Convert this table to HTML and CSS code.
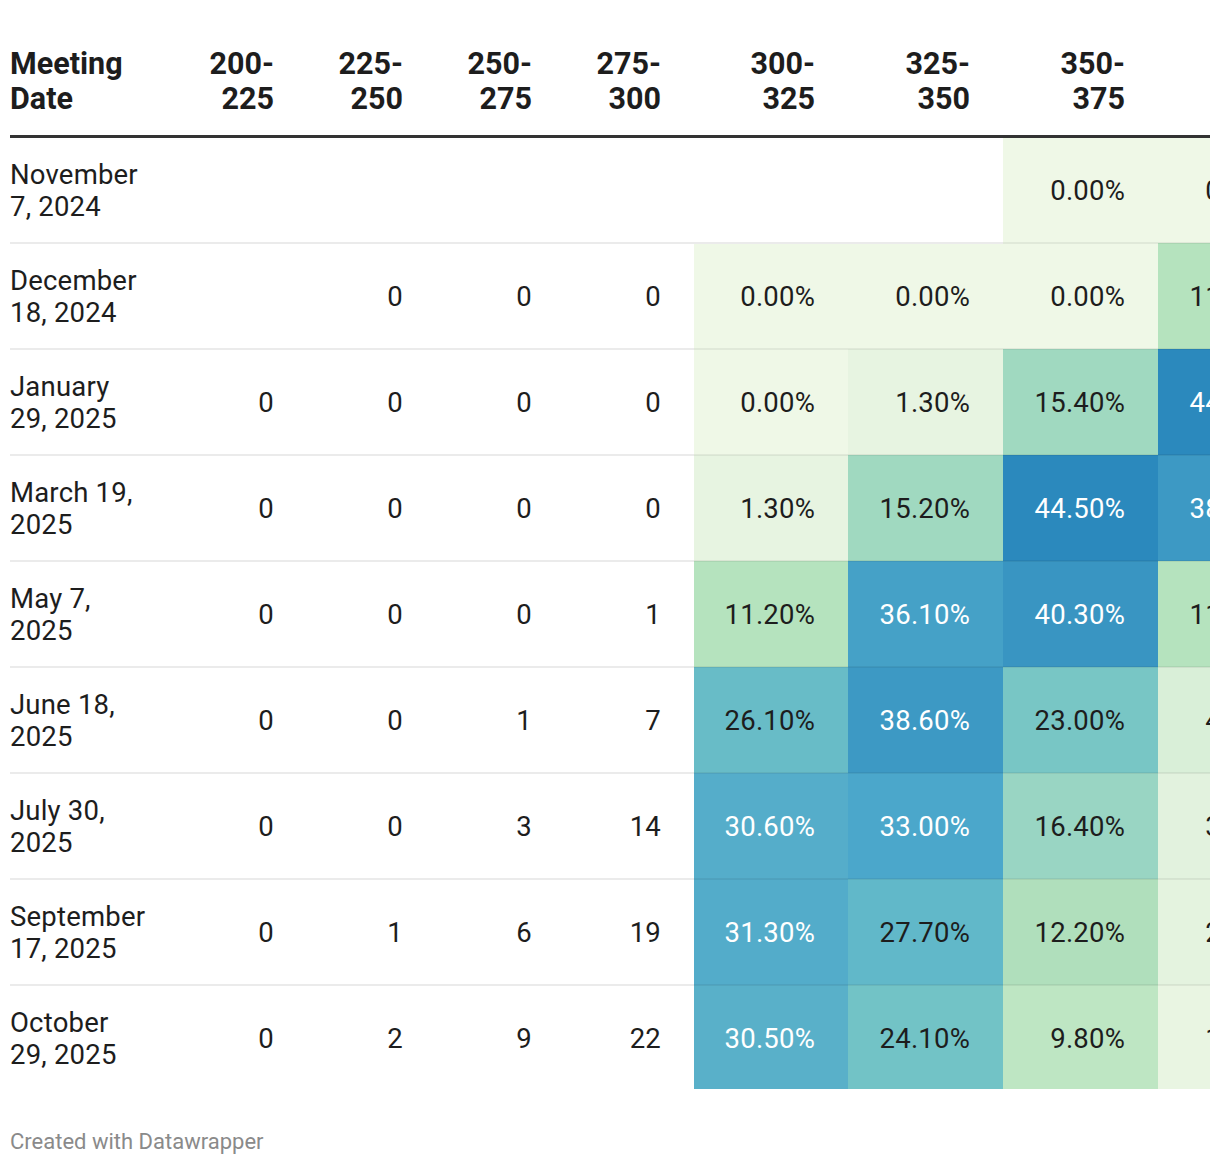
FILE: index.html
```html
<!DOCTYPE html>
<html lang="en">
<head>
<meta charset="utf-8">
<title>Meeting probabilities</title>
<link rel="stylesheet" href="styles.css">
</head>
<body>
<div class="chart">
  <div class="scroller">
    <table class="dw">
      <colgroup>
        <col class="c-date"><col class="c-num"><col class="c-num"><col class="c-num"><col class="c-num">
        <col class="c-pct1"><col class="c-pct"><col class="c-pct"><col class="c-pct">
      </colgroup>
      <thead>
        <tr>
          <th class="left">Meeting<br>Date</th>
          <th>200-<br>225</th><th>225-<br>250</th><th>250-<br>275</th><th>275-<br>300</th>
          <th>300-<br>325</th><th>325-<br>350</th><th>350-<br>375</th><th>375-<br>400</th>
        </tr>
      </thead>
      <tbody>
        <tr>
          <td class="left">November<br>7, 2024</td>
          <td></td><td></td><td></td><td></td>
          <td></td><td></td>
          <td class="h h0">0.00%</td><td class="h h0">0.00%</td>
        </tr>
        <tr>
          <td class="left">December<br>18, 2024</td>
          <td></td><td>0</td><td>0</td><td>0</td>
          <td class="h h0">0.00%</td><td class="h h0">0.00%</td><td class="h h0">0.00%</td><td class="h h11">11.20%</td>
        </tr>
        <tr>
          <td class="left">January<br>29, 2025</td>
          <td>0</td><td>0</td><td>0</td><td>0</td>
          <td class="h h0">0.00%</td><td class="h h1">1.30%</td><td class="h h15">15.40%</td><td class="h h44 w">44.10%</td>
        </tr>
        <tr>
          <td class="left">March 19,<br>2025</td>
          <td>0</td><td>0</td><td>0</td><td>0</td>
          <td class="h h1">1.30%</td><td class="h h15">15.20%</td><td class="h h44 w">44.50%</td><td class="h h38 w">38.90%</td>
        </tr>
        <tr>
          <td class="left">May 7,<br>2025</td>
          <td>0</td><td>0</td><td>0</td><td>1</td>
          <td class="h h11">11.20%</td><td class="h h36 w">36.10%</td><td class="h h40 w">40.30%</td><td class="h h11">11.40%</td>
        </tr>
        <tr>
          <td class="left">June 18,<br>2025</td>
          <td>0</td><td>0</td><td>1</td><td>7</td>
          <td class="h h26">26.10%</td><td class="h h38 w">38.60%</td><td class="h h23">23.00%</td><td class="h h4">4.30%</td>
        </tr>
        <tr>
          <td class="left">July 30,<br>2025</td>
          <td>0</td><td>0</td><td>3</td><td>14</td>
          <td class="h h30b w">30.60%</td><td class="h h33 w">33.00%</td><td class="h h16">16.40%</td><td class="h h3">3.00%</td>
        </tr>
        <tr>
          <td class="left">September<br>17, 2025</td>
          <td>0</td><td>1</td><td>6</td><td>19</td>
          <td class="h h31 w">31.30%</td><td class="h h27">27.70%</td><td class="h h12">12.20%</td><td class="h h2">2.10%</td>
        </tr>
        <tr class="last">
          <td class="left">October<br>29, 2025</td>
          <td>0</td><td>2</td><td>9</td><td>22</td>
          <td class="h h30 w">30.50%</td><td class="h h24">24.10%</td><td class="h h9">9.80%</td><td class="h h1b">1.50%</td>
        </tr>
      </tbody>
    </table>
  </div>
  <div class="footer">Created with Datawrapper</div>
</div>
</body>
</html>
```

FILE: styles.css
```css
html, body {
  margin: 0;
  padding: 0;
  background: #ffffff;
}

body {
  font-family: Roboto, "Liberation Sans", sans-serif;
  color: #1d1d1d;
}

.chart {
  padding: 0 10px;
}

.scroller {
  width: 1200px;
  overflow: hidden;
  padding-top: 46px;
}

.dw {
  border-collapse: collapse;
  table-layout: fixed;
  width: 1303px;
}

.c-date { width: 168px; }
.c-num { width: 129px; }
.c-pct1 { width: 154px; }
.c-pct { width: 155px; }

.dw th {
  font-size: 30.5px;
  line-height: 35px;
  font-weight: 700;
  text-align: right;
  vertical-align: bottom;
  padding: 0 33px 19px 0;
  border-bottom: 3px solid #333333;
}

.dw td {
  font-size: 27.5px;
  letter-spacing: 0.2px;
  line-height: 32px;
  text-align: right;
  vertical-align: middle;
  padding: 2px 33px 0 0;
  height: 102px;
  border-bottom: 2px solid #ebebeb;
}

.dw th.left,
.dw td.left {
  text-align: left;
  padding-left: 0;
  padding-right: 0;
}

.dw tr.last td {
  border-bottom: none;
  height: 101px;
}

.dw td.h { border-bottom-color: rgba(0, 0, 0, 0.06); }
.dw td.w { color: #ffffff; }

.h0 { background: #eff8e7; }
.h1 { background: #e7f4e1; }
.h1b { background: #e9f5e2; }
.h2 { background: #e4f3df; }
.h3 { background: #e2f2de; }
.h4 { background: #d9efd8; }
.h9 { background: #bee6c3; }
.h11 { background: #b5e3be; }
.h12 { background: #b0dfbc; }
.h15 { background: #a0d9c0; }
.h16 { background: #99d5c3; }
.h23 { background: #78c6c5; }
.h24 { background: #72c3c6; }
.h26 { background: #68bcc7; }
.h27 { background: #61b8c9; }
.h30 { background: #59b0c9; }
.h30b { background: #55adca; }
.h31 { background: #53acca; }
.h33 { background: #4ba7cb; }
.h36 { background: #45a1c7; }
.h38 { background: #3d99c4; }
.h40 { background: #3995c2; }
.h44 { background: #2b89bd; }

.footer {
  margin-top: 41px;
  font-size: 22px;
  line-height: 24px;
  color: #8a8a8a;
}
```
